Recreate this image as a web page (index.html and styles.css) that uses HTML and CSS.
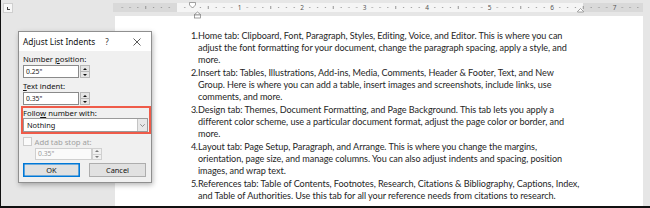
FILE: index.html
```html
<!DOCTYPE html>
<html>
<head>
<meta charset="utf-8">
<link rel="stylesheet" href="styles.css">
</head>
<body>
<div class="app">
  <div class="toprow">
    <div class="tabsel"><span class="tabglyph"></span></div>
    <svg class="ruler" width="530" height="16" viewBox="0 0 530 16">
      <defs>
        <pattern id="ticks" x="64" y="0" width="62.5" height="9" patternUnits="userSpaceOnUse">
          <rect x="7.3" y="4" width="1" height="1" fill="#8a8a8a"/>
          <rect x="15.1" y="4" width="1" height="1" fill="#8a8a8a"/>
          <rect x="22.9" y="4" width="1" height="1" fill="#8a8a8a"/>
          <rect x="30.75" y="3" width="0.9" height="3" fill="#8a8a8a"/>
          <rect x="38.6" y="4" width="1" height="1" fill="#8a8a8a"/>
          <rect x="46.4" y="4" width="1" height="1" fill="#8a8a8a"/>
          <rect x="54.2" y="4" width="1" height="1" fill="#8a8a8a"/>
        </pattern>
      </defs>
      <rect x="0" y="0" width="64" height="9" fill="#d9d9d9"/>
      <rect x="64" y="0" width="406" height="9" fill="#f5f5f5"/>
      <rect x="470" y="0" width="60" height="9" fill="#d9d9d9"/>
      <rect x="0" y="0" width="530" height="9" fill="url(#ticks)"/>
      <g class="rnum">
        <text x="126.5" y="7">1</text>
        <text x="189" y="7">2</text>
        <text x="251.5" y="7">3</text>
        <text x="314" y="7">4</text>
        <text x="376.5" y="7">5</text>
        <text x="439" y="7">6</text>
        <text x="501.5" y="7">7</text>
      </g>
      <polygon points="76.5,-0.5 82.5,-0.5 82.5,2 79.5,5 76.5,2" fill="#fff" stroke="#7a7a7a" stroke-width="0.7"/>
      <polygon points="84.5,9 87.5,11.5 87.5,12 81.5,12 81.5,11.5" fill="#fff" stroke="#7a7a7a" stroke-width="0.7"/>
      <rect x="81.5" y="12" width="6" height="3" fill="#fff" stroke="#7a7a7a" stroke-width="0.7"/>
      <polygon points="467.5,5.5 470.5,8.5 470.5,9 464.5,9 464.5,8.5" fill="#fff" stroke="#7a7a7a" stroke-width="0.7"/>
    </svg>
  </div>
  <div class="page">
    <div class="list">
      <div class="para"><span class="num">1.</span><div class="ptext">
        <span class="line">Home tab: Clipboard, Font, Paragraph, Styles, Editing, Voice, and Editor. This is where you can</span>
        <span class="line">adjust the font formatting for your document, change the paragraph spacing, apply a style, and</span>
        <span class="line">more.</span>
      </div></div>
      <div class="para"><span class="num">2.</span><div class="ptext">
        <span class="line">Insert tab: Tables, Illustrations, Add-ins, Media, Comments, Header &amp; Footer, Text, and New</span>
        <span class="line">Group. Here is where you can add a table, insert images and screenshots, include links, use</span>
        <span class="line">comments, and more.</span>
      </div></div>
      <div class="para"><span class="num">3.</span><div class="ptext">
        <span class="line">Design tab: Themes, Document Formatting, and Page Background. This tab lets you apply a</span>
        <span class="line">different color scheme, use a particular document format, adjust the page color or border, and</span>
        <span class="line">more.</span>
      </div></div>
      <div class="para"><span class="num">4.</span><div class="ptext">
        <span class="line">Layout tab: Page Setup, Paragraph, and Arrange. This is where you change the margins,</span>
        <span class="line">orientation, page size, and manage columns. You can also adjust indents and spacing, position</span>
        <span class="line">images, and wrap text.</span>
      </div></div>
      <div class="para"><span class="num">5.</span><div class="ptext">
        <span class="line">References tab: Table of Contents, Footnotes, Research, Citations &amp; Bibliography, Captions, Index,</span>
        <span class="line">and Table of Authorities. Use this tab for all your reference needs from citations to research.</span>
      </div></div>
    </div>
  </div>

  <div class="dialog">
    <div class="titlebar">
      <span class="title">Adjust List Indents</span>
      <span class="help">?</span>
      <span class="close"><svg width="8" height="8" viewBox="0 0 8 8"><path d="M0.5 0.5 L7.5 7.5 M7.5 0.5 L0.5 7.5" stroke="#333" stroke-width="0.8" fill="none"/></svg></span>
    </div>
    <div class="dbody">
      <div class="label">Number <u>p</u>osition:</div>
      <div class="field">
        <div class="input">0.25"</div>
        <div class="spin"><span class="sbtn"><i class="up"></i></span><span class="sbtn"><i class="down"></i></span></div>
      </div>
      <div class="label l2"><u>T</u>ext indent:</div>
      <div class="field">
        <div class="input">0.35"</div>
        <div class="spin"><span class="sbtn"><i class="up"></i></span><span class="sbtn"><i class="down"></i></span></div>
      </div>
      <div class="highlight">
        <div class="label">Follo<u>w</u> number with:</div>
        <div class="combo">
          <span class="cval">Nothing</span>
          <span class="carrow"><svg width="5" height="3" viewBox="0 0 5 3"><path d="M0.3 0.3 L2.5 2.5 L4.7 0.3" stroke="#666" stroke-width="0.7" fill="none"/></svg></span>
        </div>
      </div>
      <div class="checkrow">
        <span class="checkbox"></span>
        <span class="dislabel">Add tab stop at:</span>
      </div>
      <div class="field disfield">
        <div class="input dis">0.35"</div>
        <div class="spin dspin"><span class="sbtn"><i class="up"></i></span><span class="sbtn"><i class="down"></i></span></div>
      </div>
      <div class="buttons">
        <span class="btn ok">OK</span>
        <span class="btn">Cancel</span>
      </div>
    </div>
  </div>
</div>
</body>
</html>
```
FILE: styles.css
```css
* { box-sizing: border-box; }
html, body { margin: 0; padding: 0; }
body { width: 650px; height: 208px; overflow: hidden; background: #e6e6e6; }

.app {
  position: relative;
  width: 650px;
  height: 208px;
  border-left: 1px solid #111;
  border-bottom: 2px solid #111;
  background: #e6e6e6;
  display: flex;
  flex-direction: column;
}

.toprow {
  position: relative;
  z-index: 1;
  height: 16px;
  flex: none;
  display: flex;
  align-items: flex-start;
  padding-top: 3px;
}
.tabsel {
  margin-left: 2px;
  width: 10px;
  height: 10px;
  background: #f7f7f7;
  border: 1px solid #cfcfcf;
  display: flex;
  align-items: center;
  justify-content: center;
}
.tabglyph {
  width: 3px;
  height: 3px;
  border-left: 1px solid #444;
  border-bottom: 1px solid #444;
}
.ruler { margin-left: 100px; overflow: visible; flex: none; }
.rnum text { font-family: "Noto Sans", sans-serif; font-size: 6.5px; fill: #555; text-anchor: middle; }

.page {
  flex: 1;
  margin-left: 114px;
  width: 528px;
  background: #fff;
  padding: 14px 0 0 77px;
}
.list {
  font-family: Lato, "Open Sans", sans-serif;
  font-size: 9.1px;
  letter-spacing: -0.06px;
  line-height: 12.1px;
  color: #262626;
}
.para { display: flex; margin-bottom: 0.8px; }
.num { width: 7px; margin-left: -1px; flex: none; white-space: nowrap; letter-spacing: -0.4px; }
.ptext { display: flex; flex-direction: column; }
.line { white-space: nowrap; }

/* dialog */
.dialog {
  position: absolute;
  left: 17px;
  top: 31px;
  width: 134px;
  height: 152px;
  border: 1px solid #8f8f8f;
  background: #f0f0f0;
  box-shadow: 1px 2px 5px rgba(0,0,0,0.28);
  font-family: "Noto Sans", "Open Sans", sans-serif;
  font-size: 7.7px;
  color: #111;
  display: flex;
  flex-direction: column;
}
.titlebar {
  height: 19px;
  flex: none;
  background: #fff;
  display: flex;
  align-items: center;
  padding-left: 4px;
  padding-right: 4px;
}
.title { font-size: 8.3px; flex: 1; }
.help { width: 12px; text-align: center; font-size: 8px; color: #333; }
.close { width: 20px; margin-left: 14px; display: flex; justify-content: center; }

.dbody { flex: 1; padding: 3px 3px 0 4px; }
.label { height: 10px; line-height: 10px; white-space: nowrap; }
.label u { text-decoration-thickness: 0.6px; text-underline-offset: 1px; }
.l2 { margin-top: 3px; }

.field { display: flex; margin-top: 1px; height: 13px; }
.input {
  width: 56px;
  height: 100%;
  background: #fff;
  border: 1px solid #8a8a8a;
  font-size: 6.8px;
  line-height: 11px;
  padding-left: 2px;
  color: #222;
}
.spin {
  width: 10px;
  margin-left: 1px;
  display: flex;
  flex-direction: column;
}
.sbtn {
  flex: 1;
  background: #e5e5e5;
  border: 1px solid #b8b8b8;
  display: flex;
  align-items: center;
  justify-content: center;
}
.sbtn + .sbtn { border-top: none; }
.up, .down { width: 0; height: 0; border-left: 2px solid transparent; border-right: 2px solid transparent; }
.up { border-bottom: 2.5px solid #111; }
.down { border-top: 2.5px solid #111; }

.highlight {
  margin: 1px -3px 0 -2.5px;
  height: 28px;
  border: 2px solid #ef5b49;
  padding: 0 1px 0 0.5px;
}
.combo {
  height: 14px;
  background: #fff;
  border: 1px solid #9a9a9a;
  display: flex;
  align-items: center;
}
.cval { flex: 1; padding-left: 3px; font-size: 7.4px; }
.carrow {
  width: 10px;
  height: 100%;
  background: #e8e8e8;
  border-left: 1px solid #c4c4c4;
  display: flex;
  align-items: center;
  justify-content: center;
}

.checkrow { display: flex; align-items: center; margin-top: 3px; height: 9px; }
.checkbox { width: 9px; height: 9px; background: #fafafa; border: 1px solid #cccccc; flex: none; }
.dislabel { margin-left: 2.5px; color: #a0a0a0; white-space: nowrap; }

.disfield { margin-top: 2px; margin-left: 12px; height: 12px; }
.input.dis { width: 57px; border-color: #cfcfcf; color: #9a9a9a; line-height: 10px; background: #fafafa; }
.dspin { margin-left: 0; }
.dspin .sbtn { background: #f0f0f0; border-color: #d0d0d0; }
.dspin .up { border-bottom-color: #777; }
.dspin .down { border-top-color: #777; }

.buttons { display: flex; gap: 9px; margin-top: 3px; }
.btn {
  width: 57px;
  height: 14px;
  background: #e1e1e1;
  border: 1px solid #adadad;
  display: flex;
  align-items: center;
  justify-content: center;
  font-size: 7.4px;
}
.btn.ok { border-color: #0078d7; box-shadow: inset 0 0 0 0.6px #0078d7; }
```
